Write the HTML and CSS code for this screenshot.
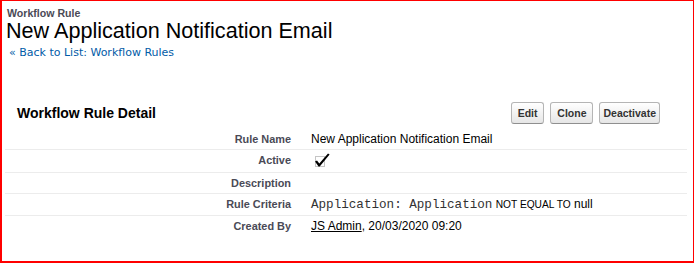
FILE: index.html
```html
<!DOCTYPE html>
<html lang="en">
<head>
    <meta charset="UTF-8">
    <title>Workflow Rule: New Application Notification Email</title>
    <link rel="stylesheet" href="styles.css">
</head>
<body>
    <div class="frame">

        <!-- Page header -->
        <div class="page-head">
            <div class="page-type">Workflow Rule</div>
            <h1 class="page-title">New Application Notification Email</h1>
            <div class="crumb"><a href="#">&laquo; Back to List: Workflow Rules</a></div>
        </div>

        <!-- Detail block -->
        <div class="block">
            <div class="block-head">
                <h2 class="block-title">Workflow Rule Detail</h2>
                <div class="btns">
                    <input class="btn" type="button" value=" Edit ">
                    <input class="btn" type="button" value=" Clone ">
                    <input class="btn" type="button" value="Deactivate">
                </div>
            </div>

            <div class="detail">
                <div class="row">
                    <div class="label">Rule Name</div>
                    <div class="value">New Application Notification Email</div>
                </div>
                <div class="row">
                    <div class="label">Active</div>
                    <div class="value">
                        <svg class="check" width="20" height="16" viewBox="0 0 20 16">
                            <rect x="4.5" y="3.5" width="9" height="10" fill="none" stroke="#8a8a8a" stroke-dasharray="1 1"/>
                            <polygon points="4,8.6 6,7.6 8.3,10.6 17,0.6 18.6,1.6 8.7,13.6 7.5,13.6" fill="#000"/>
                        </svg>
                    </div>
                </div>
                <div class="row">
                    <div class="label">Description</div>
                    <div class="value"></div>
                </div>
                <div class="row">
                    <div class="label">Rule Criteria</div>
                    <div class="value"><span class="mono">Application: Application</span> <span class="op">NOT EQUAL TO</span> null</div>
                </div>
                <div class="row">
                    <div class="label">Created By</div>
                    <div class="value"><a class="user" href="#">JS Admin</a>, 20/03/2020 09:20</div>
                </div>
            </div>
        </div>

    </div>
</body>
</html>
```

FILE: styles.css
```css
body {
    margin: 0;
    padding: 0;
    font-family: Arial, "Liberation Sans", sans-serif;
    background-color: #fff;
    color: #000;
}

/* Red outline around the page */
.frame {
    height: 263px;
    box-sizing: border-box;
    border: 1px solid #ff0000;
    border-left-width: 2px;
    border-bottom-width: 2px;
}

/* Header */
.page-head {
    padding: 6px 0 0 5px;
}

.page-type {
    font-size: 10.6px;
    font-weight: bold;
    line-height: 12px;
    color: #4a4a56;
}

.page-title {
    margin: 0 0 0 -1px;
    font-size: 21.6px;
    font-weight: normal;
    line-height: 24px;
    color: #000;
}

.crumb {
    margin-top: 3px;
    padding-left: 2px;
    font-family: "DejaVu Sans", Verdana, sans-serif;
    font-size: 11px;
    line-height: 13px;
}

.crumb a {
    color: #015ba7;
    text-decoration: none;
}

/* Detail block */
.block {
    margin: 43px 6px 0 3px;
}

.block-head {
    display: flex;
    align-items: center;
    padding: 0 27px 0 12px;
}

.block-title {
    margin: 0;
    font-size: 14px;
    font-weight: bold;
    line-height: 16px;
    color: #000;
}

.btns {
    display: flex;
    gap: 6px;
    margin-left: auto;
}

.btn {
    margin: 0;
    height: 22px;
    padding: 0 3px;
    font-family: Arial, "Liberation Sans", sans-serif;
    font-size: 10.5px;
    font-weight: bold;
    color: #333;
    background: linear-gradient(#ffffff, #e6e6e6);
    border: 1px solid #b5b5b5;
    border-bottom-color: #8f8f8f;
    border-radius: 3px;
    white-space: pre;
    cursor: pointer;
}

.detail {
    margin-top: 5px;
}

.row {
    display: grid;
    grid-template-columns: 296px 1fr;
    border-bottom: 1px solid #ececec;
}

.row:last-child {
    border-bottom: none;
}

.label {
    padding: 3px 10px 3px 2px;
    font-size: 10.9px;
    font-weight: bold;
    line-height: 14px;
    color: #4a4a56;
    text-align: right;
}

.value {
    padding: 3px 10px;
    font-size: 12px;
    line-height: 14px;
    color: #000;
}

.check {
    display: block;
}

.mono {
    font-family: "Liberation Mono", "Courier New", monospace;
    font-size: 12.6px;
    color: #333;
}

.op {
    font-size: 10.2px;
}

.user {
    color: #000;
    text-decoration: underline;
}
```
